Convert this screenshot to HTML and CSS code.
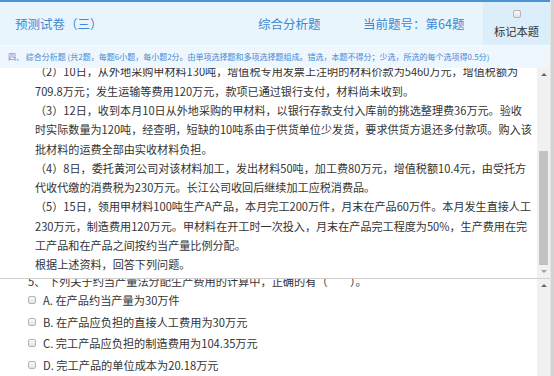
FILE: index.html
```html
<!DOCTYPE html>
<html lang="zh-CN">
<head>
    <meta charset="UTF-8">
    <meta name="viewport" content="width=device-width, initial-scale=1.0">
    <title>预测试卷（三）</title>
    <link rel="stylesheet" href="styles.css">
</head>
<body>
    <div class="page">
        <div class="main">
            <div class="header">
                <div class="paper-title">预测试卷（三）</div>
                <div class="paper-type">综合分析题</div>
                <div class="current">当前题号：第64题</div>
                <label class="mark">
                    <span class="checkbox"></span>
                    <span>标记本题</span>
                </label>
            </div>

            <div class="notice">四、 综合分析题 (共2题，每题6小题，每小题2分。由单项选择题和多项选择题组成。错选，本题不得分；少选，所选的每个选项得0.5分)</div>

            <!-- material -->
            <div class="panel material">
                <div class="panel-body">
                    <div class="material-text">
                        <p>（2）10日，从外地采购甲材料130吨，增值税专用发票上注明的材料价款为5460万元，增值税额为<br>709.8万元；发生运输等费用120万元，款项已通过银行支付，材料尚未收到。</p>
                        <p>（3）12日，收到本月10日从外地采购的甲材料，以银行存款支付入库前的挑选整理费36万元。验收<br>时实际数量为120吨，经查明，短缺的10吨系由于供货单位少发货，要求供货方退还多付款项。购入该<br>批材料的运费全部由实收材料负担。</p>
                        <p>（4）8日，委托黄河公司对该材料加工，发出材料50吨，加工费80万元，增值税额10.4元，由受托方<br>代收代缴的消费税为230万元。长江公司收回后继续加工应税消费品。</p>
                        <p>（5）15日，领用甲材料100吨生产A产品，本月完工200万件，月末在产品60万件。本月发生直接人工<br>230万元，制造费用120万元。甲材料在开工时一次投入，月末在产品完工程度为50%，生产费用在完<br>工产品和在产品之间按约当产量比例分配。</p>
                        <p>根据上述资料，回答下列问题。</p>
                    </div>
                </div>
                <div class="scrollbar">
                    <div class="arrow arrow-up"></div>
                    <div class="track"><div class="thumb"></div></div>
                    <div class="arrow arrow-down"></div>
                </div>
            </div>

            <!-- question -->
            <div class="panel question">
                <div class="panel-body">
                    <div class="question-text">5、 下列关于约当产量法分配生产费用的计算中，正确的有（　　）。</div>
                    <label class="option"><span class="checkbox"></span>A. 在产品约当产量为30万件</label>
                    <label class="option"><span class="checkbox"></span>B. 在产品应负担的直接人工费用为30万元</label>
                    <label class="option"><span class="checkbox"></span>C. 完工产品应负担的制造费用为104.35万元</label>
                    <label class="option"><span class="checkbox"></span>D. 完工产品的单位成本为20.18万元</label>
                </div>
                <div class="scrollbar">
                    <div class="arrow arrow-up"></div>
                    <div class="track"></div>
                </div>
            </div>
        </div>
        <div class="outer-bar"></div>
    </div>
</body>
</html>
```

FILE: styles.css
```css
/* Page frame */
body {
    margin: 0;
    font-family: "Noto Sans CJK SC", "Liberation Sans", sans-serif;
    color: #333;
    background: #fff;
    overflow: hidden;
}

.page {
    display: flex;
    width: 554px;
    height: 376px;
    overflow: hidden;
}

.main {
    width: 550px;
    display: flex;
    flex-direction: column;
}

.outer-bar {
    width: 4px;
    background: #d2d2d2;
    border-left: 1px solid #e6e6e6;
    box-sizing: border-box;
}

/* Header */
.header {
    height: 45px;
    box-sizing: border-box;
    border-top: 2px solid #4a94d6;
    background: #e9f5fd;
    display: grid;
    grid-template-columns: 258px 105px 120px 67px;
    align-items: center;
    font-size: 12.5px;
    color: #3f88d0;
}

.paper-title {
    padding-left: 15px;
}

.mark {
    height: 100%;
    background: #dbeefa;
    display: flex;
    flex-direction: column;
    align-items: center;
    justify-content: flex-start;
    padding-top: 8px;
    box-sizing: border-box;
    font-size: 11.3px;
    color: #333;
    gap: 5px;
}

.checkbox {
    display: inline-block;
    width: 8px;
    height: 8px;
    border: 1px solid #b4b4b4;
    border-radius: 2px;
    background: linear-gradient(#fafafa, #e2e2e2);
    box-sizing: border-box;
}

/* Notice row */
.notice {
    height: 23px;
    line-height: 22px;
    padding-left: 8px;
    background: #eef7fd;
    border-top: 1px solid #f6fbff;
    box-sizing: border-box;
    font-size: 8px;
    color: #3f8ad6;
    white-space: nowrap;
    overflow: hidden;
}

/* Scroll panels */
.panel {
    display: flex;
}

.panel-body {
    flex: 1;
    overflow: hidden;
}

.material {
    height: 210px;
    border-bottom: 1px solid #cfcfcf;
}

.question {
    flex: 1;
}

.material-text {
    margin-top: -5.6px;
    padding-left: 35px;
    font-size: 11.1px;
    line-height: 19.3px;
    white-space: nowrap;
}

.material-text p {
    margin: 0;
}

.scrollbar {
    width: 13px;
    background: #f1f1f1;
    display: flex;
    flex-direction: column;
}

.arrow {
    height: 13px;
    display: flex;
    align-items: center;
    justify-content: center;
}

.arrow::before {
    content: "";
    border-left: 3px solid transparent;
    border-right: 3px solid transparent;
}

.arrow-up::before {
    border-bottom: 3px solid #6a6a6a;
}

.arrow-down::before {
    border-top: 3px solid #a0a0a0;
}

.track {
    flex: 1;
    display: flex;
    flex-direction: column;
    justify-content: flex-end;
}

.thumb {
    height: 114px;
    margin: 0 2px;
    background: #c2c2c2;
}

/* Question */
.question-text {
    margin-top: -6.2px;
    padding-left: 28px;
    font-size: 11.2px;
    line-height: 16.3px;
    white-space: nowrap;
}

.option {
    display: flex;
    align-items: center;
    gap: 7px;
    height: 21.7px;
    padding-left: 28px;
    font-size: 11.2px;
    white-space: nowrap;
}
```
